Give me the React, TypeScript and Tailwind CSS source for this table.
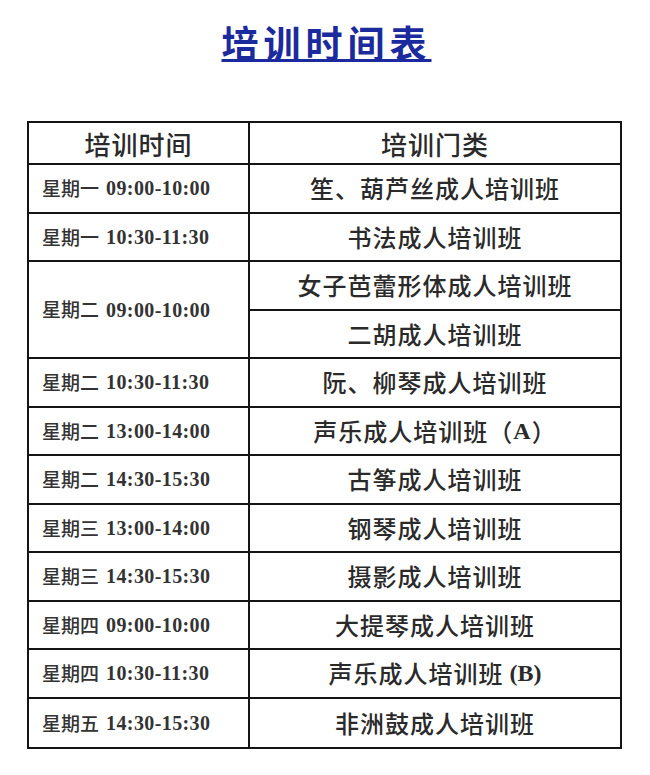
import React from "react";

const cjk = { fontFamily: '"Noto Sans CJK SC", "Noto Sans", sans-serif' };
const serif = { fontFamily: '"Liberation Serif", "Times New Roman", serif' };

type Row = { day: string; time: string; course: React.ReactNode; span?: number; skipLeft?: boolean };

const rows: Row[] = [
  { day: "星期一", time: "09:00-10:00", course: "笙、葫芦丝成人培训班" },
  { day: "星期一", time: "10:30-11:30", course: "书法成人培训班" },
  { day: "星期二", time: "09:00-10:00", course: "女子芭蕾形体成人培训班", span: 2 },
  { day: "", time: "", course: "二胡成人培训班", skipLeft: true },
  { day: "星期二", time: "10:30-11:30", course: "阮、柳琴成人培训班" },
  {
    day: "星期二",
    time: "13:00-14:00",
    course: (
      <>
        {"声乐成人培训班（"}
        <span style={serif} className="font-bold">A</span>
        {"）"}
      </>
    ),
  },
  { day: "星期二", time: "14:30-15:30", course: "古筝成人培训班" },
  { day: "星期三", time: "13:00-14:00", course: "钢琴成人培训班" },
  { day: "星期三", time: "14:30-15:30", course: "摄影成人培训班" },
  { day: "星期四", time: "09:00-10:00", course: "大提琴成人培训班" },
  {
    day: "星期四",
    time: "10:30-11:30",
    course: (
      <>
        {"声乐成人培训班"}
        <span style={serif} className="font-bold tracking-normal ml-[6px]">(B)</span>
      </>
    ),
  },
  { day: "星期五", time: "14:30-15:30", course: "非洲鼓成人培训班" },
];

export default function App() {
  return (
    <div className="w-[650px] h-[775px] bg-white" style={cjk}>
      <div className="pt-[18px] flex justify-center">
        <h1
          className="text-[37px] leading-[48px] font-bold text-[#1b2a9c] underline decoration-[2.5px] underline-offset-[1px] tracking-[5px] pl-[3px]"
          style={cjk}
        >
          培训时间表
        </h1>
      </div>
      <div className="mt-[55px] ml-[27px] w-[595px] border-2 border-[#151515] grid grid-cols-[221px_1fr] grid-rows-[42px_repeat(12,48.5px)] text-[#2a2a2a]">
        <div className="border-r-2 border-b-2 border-[#151515] flex items-center justify-center text-[26px] font-medium tracking-[1px]">
          培训时间
        </div>
        <div className="border-b-2 border-[#151515] flex items-center justify-center text-[26px] font-medium tracking-[1px]">
          培训门类
        </div>
        {rows.map((r, i) => {
          const last = i === rows.length - 1;
          return (
            <React.Fragment key={i}>
              {!r.skipLeft && (
                <div
                  className={`border-r-2 border-[#151515] flex items-center pl-[13px] text-[#333] ${
                    last ? "" : "border-b-2"
                  } ${r.span === 2 ? "row-span-2" : ""}`}
                >
                  <span className="text-[19px] font-medium">{r.day}</span>
                  <span style={serif} className="text-[20px] font-bold tracking-[0.4px] ml-[7px]">
                    {r.time}
                  </span>
                </div>
              )}
              <div
                className={`border-[#151515] flex items-center justify-center text-[24px] font-medium tracking-[1px] ${
                  last ? "" : "border-b-2"
                }`}
              >
                {r.course}
              </div>
            </React.Fragment>
          );
        })}
      </div>
    </div>
  );
}
